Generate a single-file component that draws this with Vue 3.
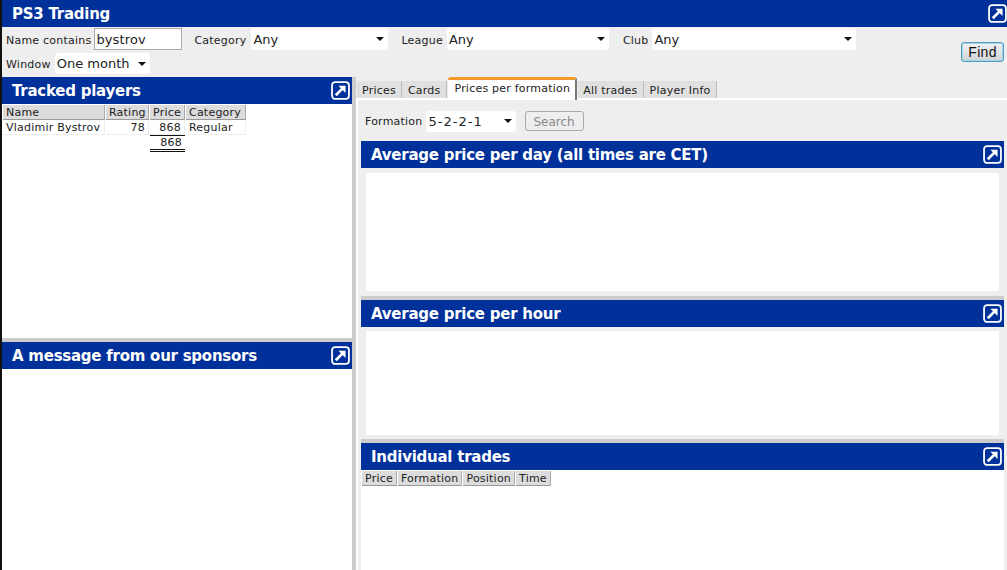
<script setup>
const tabs = [
  { label: 'Prices' },
  { label: 'Cards' },
  { label: 'Prices per formation', active: true },
  { label: 'All trades' },
  { label: 'Player Info' }
]
const tradeCols = ['Price', 'Formation', 'Position', 'Time']
</script>

<template>
  <div class="page">
    <header class="bar top">
      <span class="title">PS3 Trading</span>
      <svg class="pop" viewBox="0 0 18 18"><rect x="1" y="1" width="16" height="16" rx="3" /><path d="M4.5 13.5 11 7" /><path class="head" d="M7 4.5h6.8v6.8z" /></svg>
    </header>

    <form class="filters" @submit.prevent>
      <div class="filter-rows">
        <div class="frow">
          <label class="lbl-name">Name contains</label>
          <input class="name" value="bystrov" />
          <label class="lbl-cat">Category</label>
          <div class="sel s-cat"><select><option>Any</option></select></div>
          <label class="lbl-league">League</label>
          <div class="sel s-league"><select><option>Any</option></select></div>
          <label class="lbl-club">Club</label>
          <div class="sel s-club"><select><option>Any</option></select></div>
        </div>
        <div class="frow second">
          <label class="lbl-win">Window</label>
          <div class="sel s-win"><select><option>One month</option></select></div>
        </div>
      </div>
      <button class="find">Find</button>
    </form>

    <div class="main">
      <aside class="left">
        <section class="tracked">
          <div class="bar">
            <span class="title">Tracked players</span>
            <svg class="pop" viewBox="0 0 18 18"><rect x="1" y="1" width="16" height="16" rx="3" /><path d="M4.5 13.5 11 7" /><path class="head" d="M7 4.5h6.8v6.8z" /></svg>
          </div>
          <table class="grid">
            <thead>
              <tr><th class="c-name">Name</th><th class="c-rating">Rating</th><th class="c-price">Price</th><th class="c-cat">Category</th></tr>
            </thead>
            <tbody>
              <tr><td>Vladimir Bystrov</td><td class="num">78</td><td class="num">868</td><td>Regular</td></tr>
            </tbody>
            <tfoot>
              <tr><td></td><td></td><td class="num total">868</td><td></td></tr>
            </tfoot>
          </table>
        </section>
        <div class="hsplit"></div>
        <section class="sponsor">
          <div class="bar">
            <span class="title">A message from our sponsors</span>
            <svg class="pop" viewBox="0 0 18 18"><rect x="1" y="1" width="16" height="16" rx="3" /><path d="M4.5 13.5 11 7" /><path class="head" d="M7 4.5h6.8v6.8z" /></svg>
          </div>
        </section>
      </aside>

      <div class="vsplit"></div>

      <main class="right">
        <nav class="tabs">
          <span v-for="t in tabs" :key="t.label" class="tab" :class="{ active: t.active }">{{ t.label }}</span>
        </nav>
        <div class="tabbody">
          <div class="formrow">
            <label>Formation</label>
            <div class="sel s-form"><select><option>5-2-2-1</option></select></div>
            <button class="search" disabled>Search</button>
          </div>

          <section class="chart day">
            <div class="bar">
              <span class="title">Average price per day (all times are CET)</span>
              <svg class="pop" viewBox="0 0 18 18"><rect x="1" y="1" width="16" height="16" rx="3" /><path d="M4.5 13.5 11 7" /><path class="head" d="M7 4.5h6.8v6.8z" /></svg>
            </div>
            <div class="plot"></div>
          </section>
          <div class="hsplit"></div>
          <section class="chart hour">
            <div class="bar">
              <span class="title">Average price per hour</span>
              <svg class="pop" viewBox="0 0 18 18"><rect x="1" y="1" width="16" height="16" rx="3" /><path d="M4.5 13.5 11 7" /><path class="head" d="M7 4.5h6.8v6.8z" /></svg>
            </div>
            <div class="plot"></div>
          </section>
          <div class="hsplit"></div>
          <section class="trades">
            <div class="bar">
              <span class="title">Individual trades</span>
              <svg class="pop" viewBox="0 0 18 18"><rect x="1" y="1" width="16" height="16" rx="3" /><path d="M4.5 13.5 11 7" /><path class="head" d="M7 4.5h6.8v6.8z" /></svg>
            </div>
            <table class="grid tgrid">
              <thead><tr><th v-for="c in tradeCols" :key="c">{{ c }}</th></tr></thead>
            </table>
          </section>
        </div>
      </main>
    </div>
  </div>
</template>

<style>
html, body { margin: 0; padding: 0; background: #fff; overflow: hidden; }
</style>

<style scoped>
.page {
  width: 1007px; height: 570px; overflow: hidden; box-sizing: border-box;
  border-left: 2px solid #111; background: #fff;
  font-family: "DejaVu Sans", Verdana, sans-serif; font-size: 11px; color: #222; letter-spacing: .22px;
  display: flex; flex-direction: column;
}
.bar {
  height: 27px; flex: none; background: #00309a; color: #fff;
  display: flex; align-items: center; justify-content: space-between;
  padding: 0 2px 0 10px; box-sizing: border-box;
}
.title { font-weight: 700; font-size: 15px; letter-spacing: -.25px; line-height: 26px; padding-top: 1px; }
.pop { width: 19px; height: 19px; fill: none; stroke: #fff; stroke-width: 1.7; display: block; }
.pop path { stroke-width: 2.6; }
.pop .head { fill: #fff; stroke: none; }
.top { padding-right: 0; }

.filters {
  height: 50px; flex: none; background: #eee; display: flex; box-sizing: border-box;
  padding-left: 4px; position: relative;
}
.filter-rows { display: flex; flex-direction: column; padding-top: 1px; gap: 3px; }
.frow { display: flex; align-items: center; height: 22px; }
.frow.second { height: 21px; }
.frow label { padding-top: 2px; }
.frow.second label { padding-top: 1px; }
.name {
  width: 88px; height: 22px; box-sizing: border-box; border: 1px solid #aaa; background: #fff;
  font: 13px "DejaVu Sans", sans-serif; letter-spacing: .15px; color: #222; padding: 0 0 0 1px; margin: 0 0 0 3px; outline: none; flex: none;
}
.lbl-cat { margin-left: 12px; }
.s-cat { margin-left: 5px; width: 137px; }
.lbl-league { margin-left: 13px; }
.s-league { margin-left: 4px; width: 162px; }
.lbl-club { margin-left: 14px; }
.s-club { margin-left: 4px; width: 204px; }
.s-win { margin-left: 4px; width: 95px; }
.s-form { margin-left: 3px; width: 90px; }

.sel { position: relative; height: 100%; background: #fff; border-radius: 3px; box-sizing: border-box; flex: none; }
.sel select {
  appearance: none; -webkit-appearance: none; border: 0; background: transparent; width: 100%; height: 100%;
  font: 13px "DejaVu Sans", sans-serif; color: #222; padding: 0 2px; margin: 0; outline: none; display: block;
}
.s-form select { letter-spacing: 1px; padding-left: 3px; }
.sel::after {
  content: ""; position: absolute; right: 4px; top: 50%; margin-top: -2px;
  border-left: 4px solid transparent; border-right: 4px solid transparent; border-top: 4px solid #111; pointer-events: none;
}

.find {
  position: absolute; right: 3px; top: 15px; width: 43px; height: 20px; box-sizing: border-box;
  border: 1px solid #4f9cc0; border-radius: 3px; background: linear-gradient(#f2f2f2, #cfd3d6);
  font: 14px "Liberation Sans", Arial, sans-serif; letter-spacing: .3px; color: #111; padding: 0;
  box-shadow: inset 0 0 0 1px #a6d5e8;
}

.main { flex: 1; display: flex; min-height: 0; }
.left { width: 350px; flex: none; display: flex; flex-direction: column; }
.tracked { height: 261px; flex: none; }
.hsplit { height: 4px; background: #ccc; flex: none; }
.sponsor { flex: 1; }
.vsplit { width: 4px; background: #ccc; flex: none; }

.grid { border-collapse: separate; border-spacing: 1px 0; font-size: 11px; margin: 1px 0 0; line-height: 13px; }
.grid th {
  background: #dcdcdc; font-weight: 400; text-align: left; padding: 1px 3px 0; height: 15px; box-sizing: border-box;
  border-right: 1px solid #aaa; border-bottom: 1px solid #999; white-space: nowrap;
}
.grid td { padding: 1px 3px 0; height: 14px; box-sizing: border-box; white-space: nowrap; }
.grid tbody td { border-right: 1px solid #eee; border-bottom: 1px solid #eee; }
.num { text-align: right; }
.c-name { width: 102px; }
.grid th.c-rating { width: 43px; padding-right: 2px; }
.c-price { width: 35px; }
.c-cat { width: 60px; }
.grid td.total { border-top: 1px solid #111; border-bottom: 3px double #111; height: 17px; padding: 0 3px 0 0; }

.right { flex: 1; min-width: 0; display: flex; flex-direction: column; background: #fff; }
.tabs { height: 21px; flex: none; display: flex; align-items: flex-end; background: #eee; padding-left: .5px; border-bottom: 2px solid #fff; box-sizing: content-box; }
.tab {
  height: 17px; line-height: 19px; padding: 0 5.5px; background: #e0e0e0; border-right: 1px solid #bbb;
  white-space: nowrap; box-sizing: border-box;
}
.tab.active {
  height: 23px; line-height: 17px; margin: 0 .5px -2px 1.5px; padding: 0 5px 0 6px; background: #fff; border-top: 3px solid #f59b2b;
  border-right: 2px solid #777; border-radius: 3px 3px 0 0; position: relative;
}
.tabbody { flex: 1; min-height: 0; background: #eee; padding: 0 3px; margin-left: 2px; display: flex; flex-direction: column; }
.formrow { height: 41px; flex: none; display: flex; align-items: center; padding-left: 4px; box-sizing: border-box; padding-top: 1px; }
.formrow label { padding-top: 1px; }
.formrow .sel { height: 21px; }
.search {
  margin-left: 9px; width: 59px; height: 20px; box-sizing: border-box; border: 1px solid #aaa; border-radius: 3px;
  background: #eee; color: #888; font: 12px "DejaVu Sans", sans-serif; padding: 2px 0 0;
}
.chart { flex: none; background: #eee; display: flex; flex-direction: column; }
.day { height: 155px; }
.hour { height: 139px; }
.plot { flex: 1; background: #fff; margin: 5px; }
.hour .plot { margin-top: 4px; margin-bottom: 4px; }
.trades { flex: 1; background: #fff; min-height: 0; }
.tgrid th { padding: 1px 3px 0; }
</style>
